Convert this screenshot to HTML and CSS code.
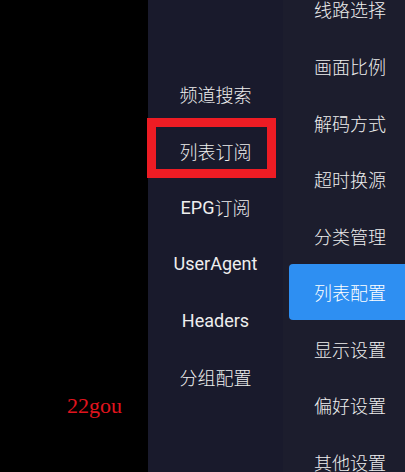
FILE: index.html
```html
<!DOCTYPE html>
<html lang="zh-CN">
<head>
<meta charset="utf-8">
<link rel="stylesheet" href="styles.css">
</head>
<body>
<div class="screen">
  <div class="blank">
    <div class="mark">22gou</div>
  </div>
  <div class="sub">
    <div class="item">频道搜索</div>
    <div class="item">列表订阅</div>
    <div class="item"><span class="lat">EPG</span>订阅</div>
    <div class="item"><span class="lat">UserAgent</span></div>
    <div class="item"><span class="lat">Headers</span></div>
    <div class="item">分组配置</div>
  </div>
  <div class="main">
    <div class="item">线路选择</div>
    <div class="item">画面比例</div>
    <div class="item">解码方式</div>
    <div class="item">超时换源</div>
    <div class="item">分类管理</div>
    <div class="item active">列表配置</div>
    <div class="item">显示设置</div>
    <div class="item">偏好设置</div>
    <div class="item">其他设置</div>
  </div>
  <div class="highlight"></div>
</div>
</body>
</html>
```

FILE: styles.css
```css
html, body {
  margin: 0;
  padding: 0;
  background: #000;
}
.screen {
  position: relative;
  width: 405px;
  height: 472px;
  overflow: hidden;
  display: flex;
  font-family: Roboto, "Noto Sans CJK SC", sans-serif;
  font-size: 18px;
  font-weight: 300;
  color: #eeeeee;
}
.lat {
  font-weight: 400;
}
.blank {
  width: 148px;
  flex: none;
  background: #000;
  padding-top: 393px;
  box-sizing: border-box;
}
.mark {
  font-family: "Liberation Serif", serif;
  font-size: 22px;
  font-weight: 400;
  color: #e0141e;
  padding-left: 67px;
  line-height: 26px;
}
.sub {
  width: 135px;
  flex: none;
  background: #191a2c;
  padding-top: 66px;
  box-sizing: border-box;
}
.sub .item {
  height: 56.5px;
  display: flex;
  align-items: center;
  justify-content: center;
}
.main {
  flex: 1;
  background: #1c1d2d;
}
.main .item {
  height: 56.55px;
  display: flex;
  align-items: center;
  padding-left: 25px;
  margin-left: 6px;
  border-radius: 4px 0 0 4px;
  box-sizing: border-box;
}
.main .item:first-child {
  margin-top: -18.8px;
}
.main .item.active {
  background: #2e8ff2;
  color: #fff;
}
.highlight {
  position: absolute;
  left: 147px;
  top: 118px;
  width: 129px;
  height: 60px;
  border: 9px solid #ed1c24;
  box-sizing: border-box;
}
```
